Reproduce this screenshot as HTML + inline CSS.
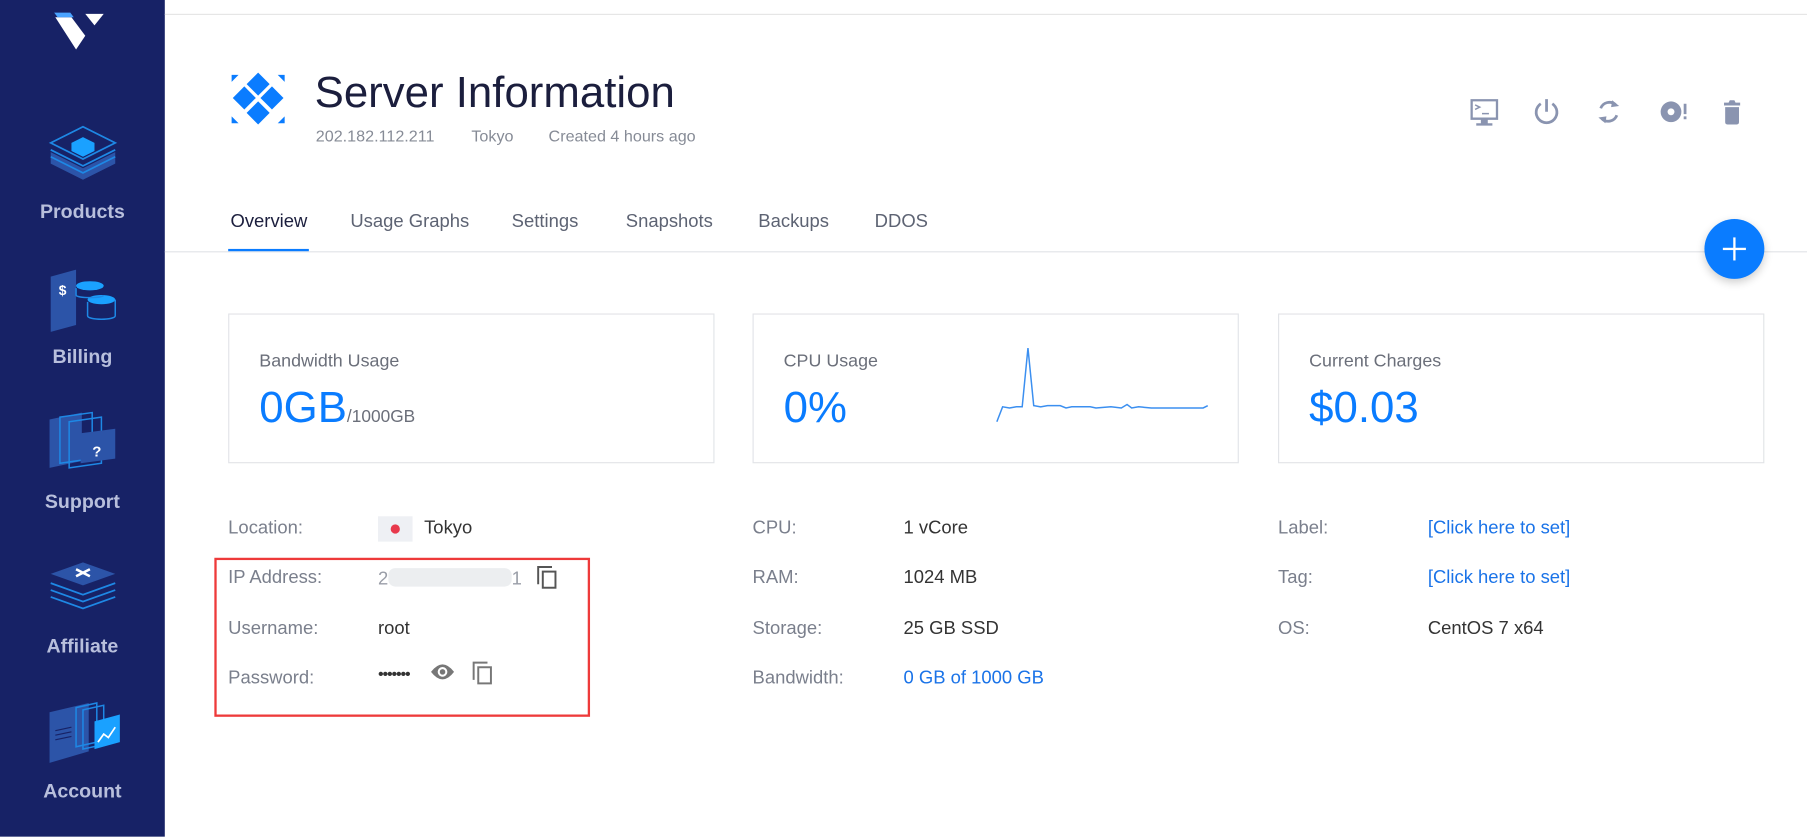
<!DOCTYPE html>
<html><head><meta charset="utf-8">
<style>
html,body{margin:0;padding:0;width:1807px;height:836px;overflow:hidden;background:#fff;font-family:"Liberation Sans",Arial,sans-serif}
#w{position:absolute;left:0;top:0;width:1568px;height:726px;transform:scale(1.15242);transform-origin:0 0}
.a{position:absolute;white-space:nowrap}
#side{position:absolute;left:0;top:0;width:143px;height:726px;background:#172266}
.nav{position:absolute;left:0;width:143px;text-align:center;color:#b8bfdc;font-weight:bold;font-size:17px}
.lbl{color:#7a7f8c;font-size:16px}
.val{color:#333;font-size:16px}
.lnk{color:#1a73e8;font-size:16px}
.card{position:absolute;top:272px;width:420px;height:128px;border:1px solid #e2e4e8}
.ct{position:absolute;left:26px;top:32px;font-size:15.5px;color:#6b6f7a}
.cv{position:absolute;left:26px;top:60px;font-size:38px;color:#0a7cff;font-weight:300}
.tab{position:absolute;top:184px;font-size:16px;color:#5d6373}
</style></head><body><div id="w">
<div id="side">
<svg class="a" style="left:44px;top:8px" width="52" height="44" viewBox="0 0 52 44">
<path d="M4 7h14l12 16-8 12z" fill="#fff"/><path d="M3 3h14l3 4H6z" fill="#4aa3ff"/><path d="M30 4h16l-8 10z" fill="#fff"/></svg>
<svg class="a" style="left:40px;top:102px" width="64" height="60" viewBox="0 0 64 60"><path d="M4 30l28 14 28-14v10L32 54 4 40z" fill="#2c54a8"/><g fill="none" stroke="#1e88e5" stroke-width="1.5"><path d="M4 22l28-14 28 14-28 14z"/><path d="M4 28l28 14 28-14"/><path d="M4 34l28 14 28-14"/></g><path d="M22 22l10-5 10 5v7l-10 5-10-5z" fill="#1aa1ff"/></svg>
<div class="nav" style="top:174px">Products</div>
<svg class="a" style="left:40px;top:234px" width="66" height="56" viewBox="0 0 66 56"><path d="M4 6l22-6v48L4 54z" fill="#2c54a8"/><text x="11" y="22" fill="#fff" font-size="12" font-weight="bold" font-family="Liberation Sans">$</text><ellipse cx="38" cy="14" rx="12" ry="4" fill="#1aa1ff"/><ellipse cx="48" cy="26" rx="12" ry="4" fill="#1aa1ff"/><g fill="none" stroke="#1e88e5" stroke-width="1.3"><path d="M26 16v6c0 3 24 3 24 0"/><path d="M36 28v12c0 4 24 4 24 0V26"/></g></svg>
<div class="nav" style="top:300px">Billing</div>
<svg class="a" style="left:40px;top:356px" width="66" height="58" viewBox="0 0 66 58"><path d="M3 8l28-6v42L3 50z" fill="#2c54a8"/><g fill="none" stroke="#1e88e5" stroke-width="1.3"><path d="M12 6l28-4v40l-28 4z"/><path d="M20 10l28-4v40l-28 4z"/></g><path d="M30 20l30-4v26l-30 4z" fill="#2c54a8"/><text x="40" y="40" fill="#fff" font-size="13" font-weight="bold" font-family="Liberation Sans">?</text></svg>
<div class="nav" style="top:426px">Support</div>
<svg class="a" style="left:40px;top:484px" width="64" height="56" viewBox="0 0 64 56"><path d="M4 14l28-10 28 10-28 10z" fill="#2c54a8"/><path d="M26 10l12 6M38 10l-12 6" stroke="#fff" stroke-width="2.2"/><g fill="none" stroke="#1e88e5" stroke-width="1.5"><path d="M4 22l28 10 28-10"/><path d="M4 28l28 10 28-10"/><path d="M4 34l28 10 28-10"/></g></svg>
<div class="nav" style="top:551px">Affiliate</div>
<svg class="a" style="left:40px;top:606px" width="66" height="60" viewBox="0 0 66 60"><path d="M3 12l34-8v42L3 56z" fill="#2c54a8"/><g fill="none" stroke="#1e88e5" stroke-width="1.3"><path d="M26 8l18-4v34l-18 4z"/><path d="M32 10l18-4v34l-18 4z"/></g><path d="M42 20l22-6v24l-22 6z" fill="#1aa1ff"/><path d="M45 38l5-7 4 3 6-9" stroke="#fff" fill="none" stroke-width="1.5"/><g stroke="#172266" stroke-width="1"><path d="M8 28l14-3M8 32l14-3M8 36l14-3"/></g></svg>
<div class="nav" style="top:677px">Account</div>
</div>
<div class="a" style="left:143px;top:12px;width:1425px;height:1px;background:#e6e6e6"></div>
<svg class="a" style="left:199px;top:62px" width="50" height="48" viewBox="0 0 50 48"><g fill="#0a7cff"><path d="M25 1l10 10-10 10-10-10z"/><path d="M25 26l10 10-10 10-10-10z"/><path d="M13 13l10 10-10 10L3 23z"/><path d="M37 13l10 10-10 10-10-10z"/><path d="M2 3h6l-6 6z"/><path d="M48 3h-6l6 6z"/><path d="M2 45h6l-6-6z"/><path d="M48 45h-6l6-6z"/></g></svg>
<div class="a" style="left:273px;top:60px;font-size:38px;color:#1b1e3d">Server Information</div>
<div class="a" style="left:274px;top:110px;font-size:14px;color:#868b96">202.182.112.211</div>
<div class="a" style="left:409px;top:110px;font-size:14px;color:#868b96">Tokyo</div>
<div class="a" style="left:476px;top:110px;font-size:14px;color:#868b96">Created 4 hours ago</div>
<svg class="a" style="left:1274px;top:84px" width="250" height="28" viewBox="0 0 250 28" fill="#8a94b0">
<path d="M2 2h24v18H17v3h4v2H7v-2h4v-3H2zM4 4v14h20V4z"/><path d="M6 7l4 2-4 2" stroke="#8a94b0" fill="none" stroke-width="1.3"/><path d="M12 14h6v1.3h-6z"/>
<g fill="none" stroke="#8a94b0" stroke-width="2.4"><path d="M63 6a9 9 0 1 0 10 0"/><path d="M68 2v11"/>
<path d="M115 10a8 8 0 0 1 13-3"/><path d="M129 16a8 8 0 0 1-13 3"/></g><path d="M125 3l6 5-7 1zM119 23l-6-5 7-1z"/>
<circle cx="176" cy="13" r="9"/><circle cx="176" cy="13" r="3" fill="#fff"/><path d="M187 6h2.4v9H187zM187 17h2.4v2.5H187z"/>
<path d="M222 5h4l1-2h4l1 2h4v2.5h-14zM223 9h12v13q0 2-2 2h-8q-2 0-2-2z"/></svg>
<div class="tab" style="left:200px;color:#1b1e3d">Overview</div>
<div class="tab" style="left:304px">Usage Graphs</div>
<div class="tab" style="left:444px">Settings</div>
<div class="tab" style="left:543px">Snapshots</div>
<div class="tab" style="left:658px">Backups</div>
<div class="tab" style="left:759px">DDOS</div>
<div class="a" style="left:143px;top:218px;width:1425px;height:1px;background:#e2e4e8"></div>
<div class="a" style="left:198px;top:216px;width:70px;height:2px;background:#0a7cff"></div>
<div class="a" style="left:1479px;top:190px;width:52px;height:52px;border-radius:50%;background:#0a7cff;box-shadow:0 3px 8px rgba(0,0,0,.2)"></div>
<div class="a" style="left:1495px;top:215px;width:20px;height:2.4px;background:#fff"></div>
<div class="a" style="left:1503.8px;top:206px;width:2.4px;height:20px;background:#fff"></div>
<div class="card" style="left:198px"><div class="ct">Bandwidth Usage</div><div class="cv">0GB<span style="font-size:15px;color:#6b6f7a;font-weight:normal">/1000GB</span></div></div>
<div class="card" style="left:653px"><div class="ct">CPU Usage</div><div class="cv">0%</div>
<svg class="a" style="left:0;top:0" width="420" height="128"><polyline fill="none" stroke="#3b8ff0" stroke-width="1.3" points="211,93 216,80 222,81 228,80 233,80 238,29 243,79 249,80 255,79 266,79 271,81 276,80 292,80 297,81 310,80 319,81 324,78 328,81 334,80 345,81 380,81 387,81 390,81 394,79"/></svg></div>
<div class="card" style="left:1109px"><div class="ct">Current Charges</div><div class="cv">$0.03</div></div>
<div class="a lbl" style="left:198px;top:450px">Location:</div>
<div class="a" style="left:328px;top:448px;width:30px;height:22px;background:#eef0f4"></div>
<div class="a" style="left:339px;top:455px;width:8px;height:8px;border-radius:50%;background:#e8394c"></div>
<div class="a val" style="left:368px;top:450px">Tokyo</div>
<div class="a lbl" style="left:198px;top:493px">IP Address:</div>
<div class="a" style="left:328px;top:493px;font-size:16px;color:#9a9ea8">2<span style="display:inline-block;width:107px;height:16px;background:#eceef0;vertical-align:-2px;border-radius:6px"></span>1</div>
<svg class="a" style="left:464px;top:489px" width="22" height="24" viewBox="0 0 22 24" fill="none" stroke="#555" stroke-width="1.7"><path d="M3 18V3h12"/><rect x="7" y="7" width="11" height="14"/></svg>
<div class="a lbl" style="left:198px;top:537px">Username:</div>
<div class="a val" style="left:328px;top:537px">root</div>
<div class="a lbl" style="left:198px;top:580px">Password:</div>
<div class="a val" style="left:328px;top:576px;font-size:14px;letter-spacing:-1px">•••••••</div>
<svg class="a" style="left:373px;top:574px" width="22" height="18" viewBox="0 0 22 18"><path d="M1 9q10-13 20 0-10 13-20 0z" fill="#777"/><circle cx="11" cy="9" r="4.2" fill="#fff"/><circle cx="11" cy="9" r="2.4" fill="#777"/></svg>
<svg class="a" style="left:408px;top:572px" width="22" height="24" viewBox="0 0 22 24" fill="none" stroke="#777" stroke-width="1.7"><path d="M3 18V3h12"/><rect x="7" y="7" width="11" height="14"/></svg>
<div class="a" style="left:186px;top:484px;width:322px;height:134px;border:2px solid #ee3a3a"></div>
<div class="a lbl" style="left:653px;top:450px">CPU:</div><div class="a val" style="left:784px;top:450px">1 vCore</div>
<div class="a lbl" style="left:653px;top:493px">RAM:</div><div class="a val" style="left:784px;top:493px">1024 MB</div>
<div class="a lbl" style="left:653px;top:537px">Storage:</div><div class="a val" style="left:784px;top:537px">25 GB SSD</div>
<div class="a lbl" style="left:653px;top:580px">Bandwidth:</div><div class="a lnk" style="left:784px;top:580px">0 GB of 1000 GB</div>
<div class="a lbl" style="left:1109px;top:450px">Label:</div><div class="a lnk" style="left:1239px;top:450px">[Click here to set]</div>
<div class="a lbl" style="left:1109px;top:493px">Tag:</div><div class="a lnk" style="left:1239px;top:493px">[Click here to set]</div>
<div class="a lbl" style="left:1109px;top:537px">OS:</div><div class="a val" style="left:1239px;top:537px">CentOS 7 x64</div>
</div></body></html>
